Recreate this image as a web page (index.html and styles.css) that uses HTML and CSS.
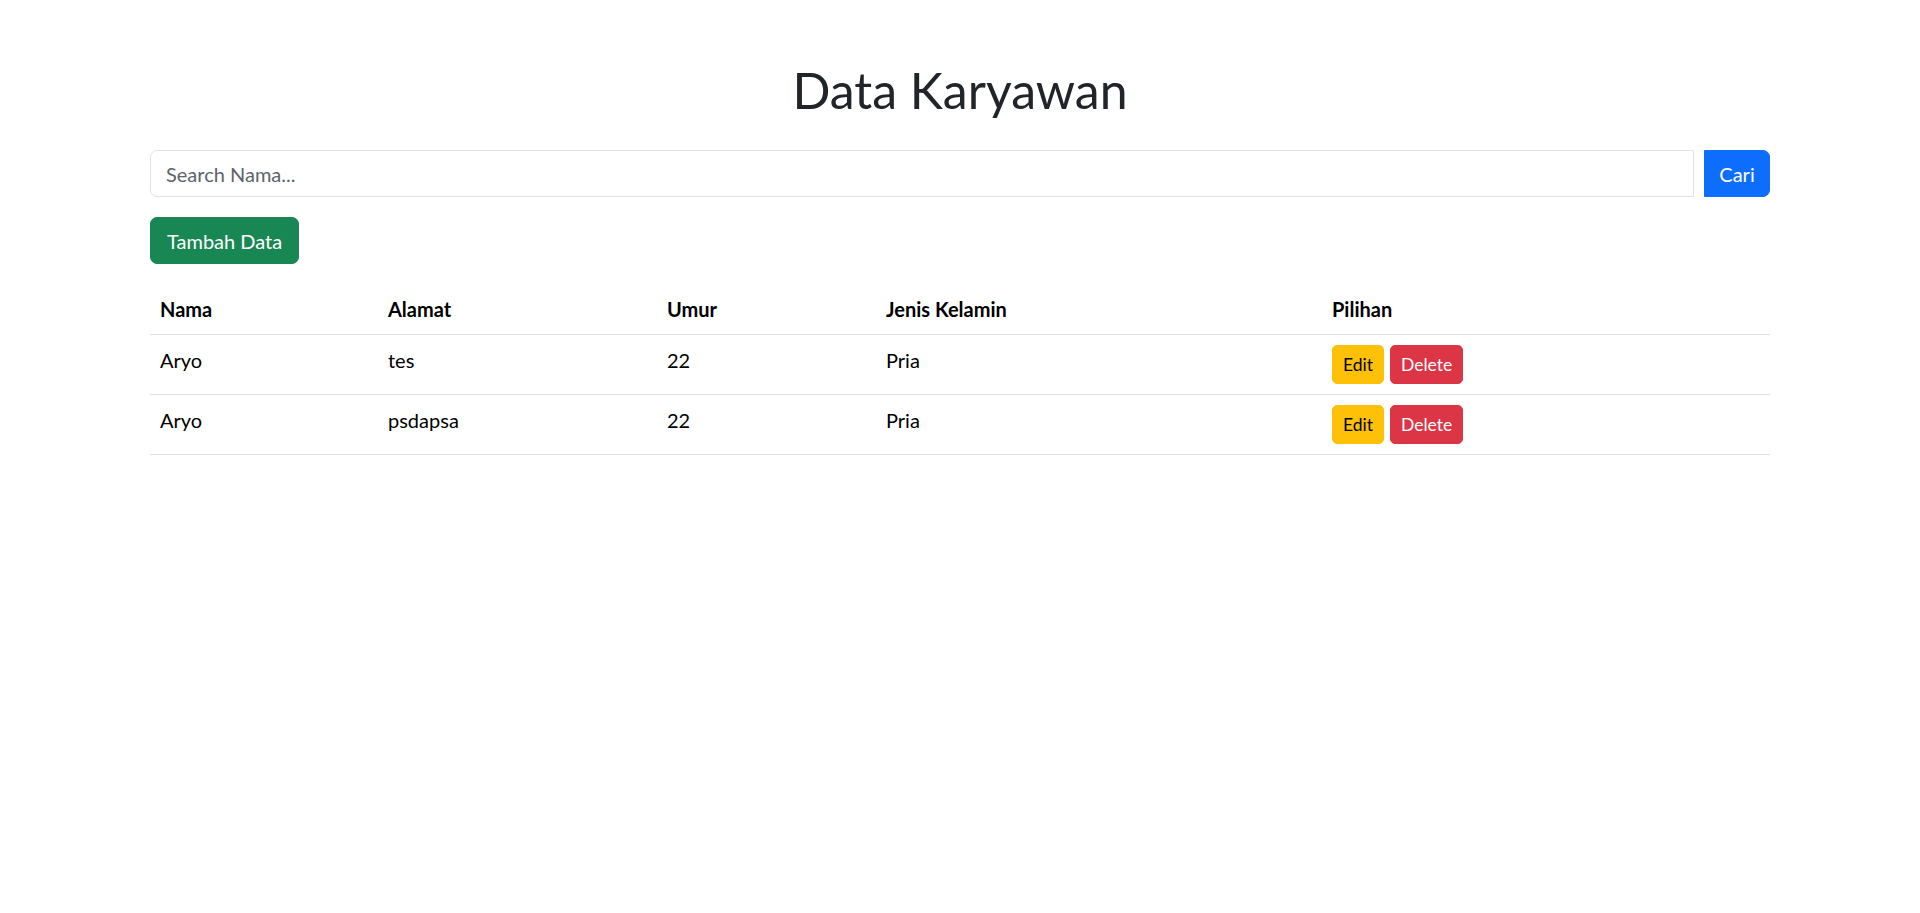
FILE: index.html
```html
<!DOCTYPE html>
<html lang="id">
<head>
<meta charset="utf-8">
<title>Data Karyawan</title>
<link rel="stylesheet" href="styles.css">
</head>
<body>
<div class="container">
  <h1 class="title">Data Karyawan</h1>
  <form class="search-row">
    <input class="search-input" type="text" placeholder="Search Nama...">
    <button class="btn btn-primary btn-cari" type="button">Cari</button>
  </form>
  <div class="actions">
    <button class="btn btn-success" type="button">Tambah Data</button>
  </div>
  <table class="table">
    <colgroup>
      <col class="col-nama">
      <col class="col-alamat">
      <col class="col-umur">
      <col class="col-jk">
      <col class="col-pilihan">
    </colgroup>
    <thead>
      <tr>
        <th>Nama</th>
        <th>Alamat</th>
        <th>Umur</th>
        <th>Jenis Kelamin</th>
        <th>Pilihan</th>
      </tr>
    </thead>
    <tbody>
      <tr>
        <td>Aryo</td>
        <td>tes</td>
        <td>22</td>
        <td>Pria</td>
        <td><div class="row-actions"><button class="btn btn-sm btn-warning" type="button">Edit</button><button class="btn btn-sm btn-danger" type="button">Delete</button></div></td>
      </tr>
      <tr>
        <td>Aryo</td>
        <td>psdapsa</td>
        <td>22</td>
        <td>Pria</td>
        <td><div class="row-actions"><button class="btn btn-sm btn-warning" type="button">Edit</button><button class="btn btn-sm btn-danger" type="button">Delete</button></div></td>
      </tr>
    </tbody>
  </table>
</div>
</body>
</html>
```

FILE: styles.css
```css
* {
  box-sizing: border-box;
}

html, body {
  margin: 0;
  padding: 0;
  background: #fff;
}

body {
  font-family: Lato, "Noto Sans", "Open Sans", sans-serif;
  font-size: 20px;
  line-height: 30px;
  color: #212529;
}

.container {
  width: 1620px;
  margin: 0 auto;
  padding-top: 60px;
}

.title {
  margin: 0 0 30px;
  font-size: 50px;
  line-height: 60px;
  font-weight: 400;
  text-align: center;
  color: #212529;
}

.search-row {
  display: flex;
  gap: 10px;
  margin: 0 0 20px;
}

.search-input {
  flex: 1;
  height: 47px;
  padding: 0 15px;
  border: 1px solid #dee2e6;
  border-radius: 7px 0 0 7px;
  font-family: inherit;
  font-size: 20px;
  color: #212529;
  outline: none;
}

.search-input::placeholder {
  color: #5c636a;
}

.btn {
  display: inline-flex;
  align-items: center;
  justify-content: center;
  height: 47px;
  padding: 0 16px;
  border: 1px solid transparent;
  border-radius: 7px;
  font-family: inherit;
  font-size: 20px;
  line-height: 30px;
  white-space: nowrap;
  cursor: pointer;
}

.btn-cari {
  border-radius: 0 7px 7px 0;
  width: 66px;
}

.btn-primary {
  background: #0d6efd;
  border-color: #0d6efd;
  color: #fff;
}

.btn-success {
  background: #198754;
  border-color: #198754;
  color: #fff;
}

.btn-warning {
  background: #ffc107;
  border-color: #ffc107;
  color: #000;
}

.btn-danger {
  background: #dc3545;
  border-color: #dc3545;
  color: #fff;
}

.btn-sm {
  height: 39px;
  padding: 0 10px;
  border-radius: 5px;
  font-size: 17.5px;
  line-height: 26px;
}

.actions {
  margin: 0 0 20px;
  display: flex;
}

.table {
  width: 100%;
  border-collapse: collapse;
  table-layout: fixed;
  color: #000;
}

.col-nama { width: 228px; }
.col-alamat { width: 279px; }
.col-umur { width: 219px; }
.col-jk { width: 446px; }
.col-pilihan { width: 448px; }

.table th,
.table td {
  padding: 10px;
  text-align: left;
  vertical-align: top;
  border-bottom: 1px solid #dee2e6;
}

.table th {
  font-weight: 700;
}

.row-actions {
  display: flex;
  gap: 6px;
}
```
